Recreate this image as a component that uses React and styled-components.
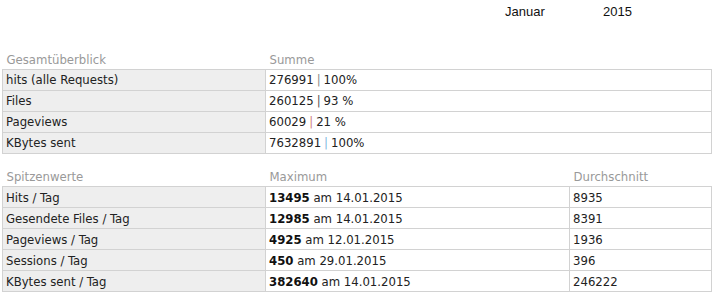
import React from 'react'
import styled, {createGlobalStyle} from 'styled-components'

const Global = createGlobalStyle`
  body {
    margin: 0;
    background: #fff;
    font-family: "DejaVu Sans Condensed", "DejaVu Sans", sans-serif;
  }
`

const Page = styled.div`
  width: 715px;
  padding: 0 0 0 2px;
  box-sizing: border-box;
`

const Top = styled.div`
  display: flex;
  height: 22px;
  align-items: center;
  padding-left: 503px;
  font-family: "Liberation Sans", Arial, sans-serif;
  font-size: 13px;
  color: #111;
`

const Month = styled.div`
  width: 98px;
`

const Table = styled.table`
  border-collapse: collapse;
  width: 710px;
  margin-top: ${p => p.$gap}px;
  font-size: 13px;
  color: #222;
`

const Head = styled.th`
  text-align: left;
  font-weight: normal;
  color: #999;
  height: 19px;
  padding: 0 0 2px 4px;
  box-sizing: border-box;
  vertical-align: bottom;
  width: ${p => p.$w ? p.$w + 'px' : 'auto'};
`

const Label = styled.td`
  border: 1px solid #d2d2d2;
  height: 21px;
  padding: 0 3px;
  box-sizing: border-box;
  background-color: #efefef;
  background-image: repeating-conic-gradient(#e7e7e7 0 25%, #f5f5f5 0 50%);
  background-size: 2px 2px;
`

const Cell = styled.td`
  border: 1px solid #d2d2d2;
  height: 21px;
  padding: 0 3px;
  box-sizing: border-box;
`

const Sep = styled.span`
  color: ${p => p.$c};
  padding: 0 3px;
`

const Strong = styled.b`
  font-weight: bold;
  color: #111;
`

const overview = [
  ['hits (alle Requests)', '276991', '100%', '#888'],
  ['Files', '260125', '93 %', '#555'],
  ['Pageviews', '60029', '21 %', '#d08080'],
  ['KBytes sent', '7632891', '100%', '#7fb8e0'],
]

const peaks = [
  ['Hits / Tag', '13495', '14.01.2015', '8935'],
  ['Gesendete Files / Tag', '12985', '14.01.2015', '8391'],
  ['Pageviews / Tag', '4925', '12.01.2015', '1936'],
  ['Sessions / Tag', '450', '29.01.2015', '396'],
  ['KBytes sent / Tag', '382640', '14.01.2015', '246222'],
]

const App = () => {
  return (
    <Page>
      <Global />
      <Top>
        <Month>Januar</Month>
        <div>2015</div>
      </Top>
      <Table $gap={28}>
        <thead>
          <tr>
            <Head $w={263}>Gesamtüberblick</Head>
            <Head>Summe</Head>
          </tr>
        </thead>
        <tbody>
          {overview.map((r, i) => (
            <tr key={i}>
              <Label>{r[0]}</Label>
              <Cell>{r[1]}<Sep $c={r[3]}>|</Sep>{r[2]}</Cell>
            </tr>
          ))}
        </tbody>
      </Table>
      <Table $gap={14}>
        <thead>
          <tr>
            <Head $w={263}>Spitzenwerte</Head>
            <Head $w={304}>Maximum</Head>
            <Head>Durchschnitt</Head>
          </tr>
        </thead>
        <tbody>
          {peaks.map((r, i) => (
            <tr key={i}>
              <Label>{r[0]}</Label>
              <Cell><Strong>{r[1]}</Strong> am {r[2]}</Cell>
              <Cell>{r[3]}</Cell>
            </tr>
          ))}
        </tbody>
      </Table>
    </Page>
  )
}

export default App
